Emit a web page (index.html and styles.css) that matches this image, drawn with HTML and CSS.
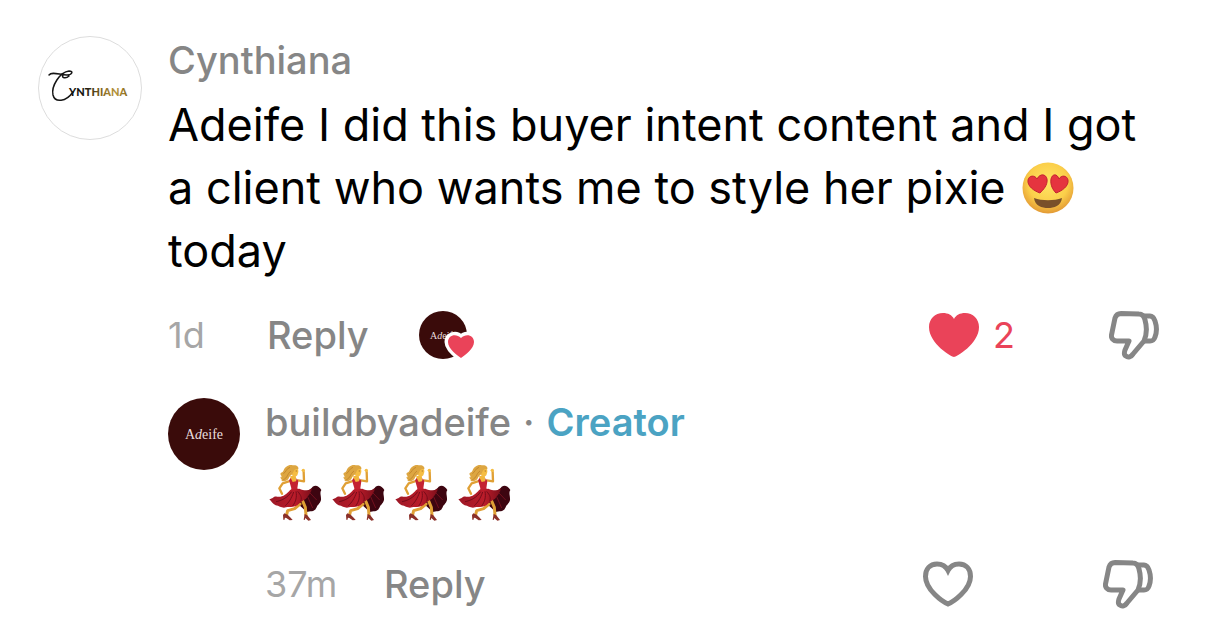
FILE: index.html
```html
<!DOCTYPE html>
<html lang="en">
<head>
  <meta charset="UTF-8">
  <meta name="viewport" content="width=device-width, initial-scale=1">
  <title>Comments</title>
  <link rel="stylesheet" href="styles.css">
</head>

<body>
  <!-- shared icons -->
  <svg class="sprite" aria-hidden="true">
    <defs>
      <linearGradient id="gold" x1="0" x2="1">
        <stop offset="0" stop-color="#111"/>
        <stop offset="0.3" stop-color="#1c1a12"/>
        <stop offset="0.55" stop-color="#7d6222"/>
        <stop offset="0.8" stop-color="#b8963e"/>
        <stop offset="1" stop-color="#8a6a1c"/>
      </linearGradient>
      <radialGradient id="face" cx="0.5" cy="0.4" r="0.6">
        <stop offset="0" stop-color="#ffe566"/>
        <stop offset="0.65" stop-color="#fbcf4a"/>
        <stop offset="1" stop-color="#e39a35"/>
      </radialGradient>
      <linearGradient id="skirt" x1="0" x2="1">
        <stop offset="0" stop-color="#9c1826"/>
        <stop offset="0.6" stop-color="#bb1c2a"/>
        <stop offset="1" stop-color="#7d0f1b"/>
      </linearGradient>
    </defs>
    <symbol id="heart" viewBox="0 0 50 46">
      <path d="M25 45C23 45 0 32 0 15C0 7 6 1 14 1C19 1 23 3 25 7C27 3 31 1 36 1C44 1 50 7 50 15C50 32 27 45 25 45Z"/>
    </symbol>
    <symbol id="heart-line" viewBox="0 0 50 46">
      <path d="M25 43C20 41 2.500 29 2.500 15.500C2.500 8 7 3 14 3C19 3 23 5.500 25 9.500C27 5.500 31 3 36 3C43 3 47.500 8 47.500 15.500C47.500 29 30 41 25 43Z"/>
    </symbol>
    <symbol id="dislike" viewBox="0 0 50 50">
      <path d="M12 3.500L30 4C33 4 35 6 36 10C38 17 38 24 35 31L24 44C22 47 19 48 17 46C15 45 15 43 16 40L20 31L8 31C4 31 2 28 2.500 25L6 8C7 5 9 3.500 12 3.500Z"/>
      <path d="M34 6H41C44 6 45 8 46 11C48 17 48 22 46 27C45 30 44 31 41 31H35"/>
    </symbol>
    <symbol id="dancer" viewBox="24 24 165 178">
      <path fill="#3d0510" d="M126 112C138 106 150 106 158 94C168 88 178 94 184 104C178 112 184 122 183 134C180 146 172 148 170 156C163 172 150 166 140 170C130 160 118 150 112 144Z"/>
      <path fill="none" stroke="#e0a035" stroke-width="7" stroke-linecap="round" stroke-linejoin="round" d="M86 78L68 84L58 99L66 115M114 75L132 78L131 50"/>
      <path fill="none" stroke="#e0a035" stroke-width="9" stroke-linecap="round" stroke-linejoin="round" d="M120 146L104 160L83 166L80 178M126 132L136 156L138 180"/>
      <path fill="#f2b63c" d="M91 62L107 62L111 82L92 84Z"/>
      <path fill="#f5bd43" d="M97 36C107 33 116 39 115 50L112 60C107 66 99 65 96 59Z"/>
      <path fill="#dda641" d="M62 58C59 52 66 53 70 47C74 35 86 27 98 30C110 28 117 34 115 42C107 39 103 43 100 50C97 60 89 61 87 67C84 76 73 80 64 76C69 73 61 71 61 64C64 68 67 65 62 58Z"/>
      <path fill="none" stroke="#b97a26" stroke-width="2" d="M70 55C79 50 78 40 90 36M70 73C84 67 80 57 93 47"/>
      <path fill="#c42231" d="M87 75L92 68L98 80L108 78L110 69L115 78L112 99L123 112L91 118L94 99Z"/>
      <path fill="url(#skirt)" d="M91 103L118 100C132 106 146 108 156 98C154 112 146 120 138 130C128 137 119 141 112 150C97 158 88 154 78 156C67 160 59 152 47 150C38 146 34 138 28 132C39 130 41 122 51 124C67 127 80 116 91 103Z"/>
      <path fill="none" stroke="#750c1a" stroke-width="3" d="M95 109C82 128 64 136 48 139M101 110C94 130 86 142 76 151M108 108C111 125 108 138 98 152M113 108C124 121 126 128 122 138"/>
      <path fill="none" stroke="#74101e" stroke-width="3" d="M150 113L170 134M142 122L158 158"/>
      <path fill="#8b3029" d="M73 174L83 178L92 187L98 194L89 195L79 188L75 187L73 194L70 193L69 179ZM134 176L142 180L153 194L145 196L136 188L134 194L131 193Z"/>
      <circle cx="130" cy="45" r="5" fill="#f5bd43"/>
      <path fill="#68331b" d="M107 46H111V48H107Z"/>
    </symbol>
  </svg>

  <main class="comments">
    <article class="comment">
      <a class="avatar" href="#cynthiana" aria-label="Cynthiana">
        <svg viewBox="0 0 104 104">
          <circle cx="52" cy="52" r="51.500" fill="#fff" stroke="#ddd"/>
          <path d="M11 39C14 35 22 39 29 39C34 39 36 35 31 35C22 36 13 50 15 59C17 67 28 66 35 56M25 39C23 42 28 43 31 40" fill="none" stroke="#151515" stroke-width="1.500" stroke-linecap="round"/>
          <text class="logo-text" x="31" y="60" fill="url(#gold)">YNTHIANA</text>
        </svg>
      </a>
      <div class="content">
        <a class="name" href="#cynthiana">Cynthiana</a>
        <p class="text">Adeife I did this buyer intent content and I got a client who wants me to style her pixie
          <svg class="emoji" viewBox="0 0 52 52" role="img" aria-label="heart eyes">
            <circle cx="26" cy="26" r="25.500" fill="url(#face)"/>
            <g fill="#e5343f" stroke="#c32330">
              <path d="M18 31C12 29 5 24 6 18C7 13 13 13 15 17C18 11 24 12 25 17C26 23 21 28 18 31Z"/>
              <path d="M34 31C31 28 28 23 29 17C30 12 35 11 37 17C39 13 45 13 46 18C47 24 40 29 34 31Z"/>
            </g>
            <path d="M12 36C20 39 32 39 40 36C39 44 32 46 26 46C20 46 13 44 12 36Z" fill="#79502a"/>
          </svg>
          today</p>

        <div class="actions">
          <time class="time">1d</time>
          <button class="reply-btn" type="button">Reply</button>
          <span class="liked">
            <svg viewBox="0 0 58 50" role="img" aria-label="Liked by creator">
              <circle cx="25" cy="25" r="24" fill="#3a0b0a"/>
              <text class="mini-text" x="12" y="29">A<tspan font-style="italic">d</tspan>eife</text>
              <path d="M43 48C39 45 30 39 30 32C30 25 38 23 43 28C48 23 56 25 56 32C56 39 47 45 43 48Z" fill="#ea4359" stroke="#fff" stroke-width="7" paint-order="stroke"/>
            </svg>
          </span>
          <button class="like is-liked" type="button" aria-label="Like"><svg class="heart"><use href="#heart"/></svg><span>2</span></button>
          <button class="dislike" type="button" aria-label="Dislike"><svg class="thumb"><use href="#dislike"/></svg></button>
        </div>

        <article class="comment reply">
          <a class="avatar" href="#buildbyadeife" aria-label="buildbyadeife">
            <svg viewBox="0 0 72 72">
              <circle cx="36" cy="36" r="36" fill="#3a0b0a"/>
              <text class="brand-text" x="36" y="41" text-anchor="middle">A<tspan font-style="italic">d</tspan>eife</text>
            </svg>
          </a>
          <div class="content">
            <div class="author">
              <a class="name" href="#buildbyadeife">buildbyadeife</a>
              <span class="dot">·</span>
              <span class="creator">Creator</span>
            </div>
            <p class="dancers" role="img" aria-label="dancing">
              <svg><use href="#dancer"/></svg>
              <svg><use href="#dancer"/></svg>
              <svg><use href="#dancer"/></svg>
              <svg><use href="#dancer"/></svg>
            </p>
            <div class="actions">
              <time class="time">37m</time>
              <button class="reply-btn" type="button">Reply</button>
              <button class="like" type="button" aria-label="Like"><svg class="heart"><use href="#heart-line"/></svg></button>
              <button class="dislike" type="button" aria-label="Dislike"><svg class="thumb"><use href="#dislike"/></svg></button>
            </div>
          </div>
        </article>
      </div>
    </article>
  </main>
</body>
</html>
```
FILE: styles.css
```css
* {
  box-sizing: border-box;
}
body {
  margin: 0;
  background: #fff;
  color: #000;
  font-family: Inter, "Liberation Sans", sans-serif;
}
a {
  text-decoration: none;
}
button {
  padding: 0;
  border: 0;
  background: none;
  font: inherit;
  cursor: pointer;
}
svg {
  display: block;
}
.sprite {
  position: absolute;
  width: 0;
  height: 0;
}
.comments {
  padding: 36px 47px 0 38px;
}

/* comment */
.comment {
  display: flex;
  gap: 26px;
}
.avatar {
  flex: none;
  width: 104px;
}
.content {
  flex: 1;
  min-width: 0;
}
.name {
  display: block;
  color: #868686;
  font-size: 38px;
  font-weight: 500;
  line-height: 48px;
}
.text {
  margin: 9px 0 0;
  font-size: 45px;
  font-weight: 400;
  line-height: 63px;
}
.emoji {
  display: inline-block;
  width: 52px;
  height: 52px;
  margin: 0 4px;
  vertical-align: -10px;
}

/* action row */
.actions {
  display: flex;
  align-items: center;
  height: 50px;
  margin-top: 28px;
}
.time {
  width: 99px;
  color: #a6a6a6;
  font-size: 36px;
}
.reply-btn {
  color: #868686;
  font-size: 38px;
  font-weight: 500;
}
.liked {
  width: 58px;
  margin-left: 49px;
}
.like {
  display: flex;
  align-items: center;
  gap: 14px;
  width: 180px;
  margin-left: auto;
  color: #868686;
  font-size: 36px;
}
.heart {
  width: 50px;
  height: 46px;
  fill: none;
  stroke: currentColor;
  stroke-width: 5;
}
.is-liked {
  color: #ea4359;
}
.is-liked .heart {
  fill: currentColor;
  stroke: none;
}
.thumb {
  width: 50px;
  height: 50px;
  fill: none;
  stroke: #868686;
  stroke-width: 5;
  stroke-linejoin: round;
}

/* nested reply */
.reply {
  gap: 25px;
  margin-top: 38px;
}
.reply .avatar {
  width: 72px;
}
.reply .content {
  padding-right: 6px;
}
.reply .time {
  width: 119px;
}
.author {
  display: flex;
  gap: 12px;
  font-size: 38px;
  font-weight: 500;
  line-height: 48px;
}
.dot {
  color: #868686;
}
.creator {
  color: #4ba3c3;
  font-weight: 600;
}
.dancers {
  display: flex;
  gap: 8px;
  margin: 17px 0 0 3px;
}
.dancers svg {
  width: 55px;
  height: 60px;
}
.reply .actions {
  margin-top: 36px;
}

/* avatar lettering */
.logo-text {
  font-family: Lato, sans-serif;
  font-size: 11px;
  font-weight: 900;
}
.brand-text,
.mini-text {
  fill: #e8dede;
  font-family: "Liberation Serif", serif;
  font-size: 14px;
}
.mini-text {
  font-size: 10px;
}
```
